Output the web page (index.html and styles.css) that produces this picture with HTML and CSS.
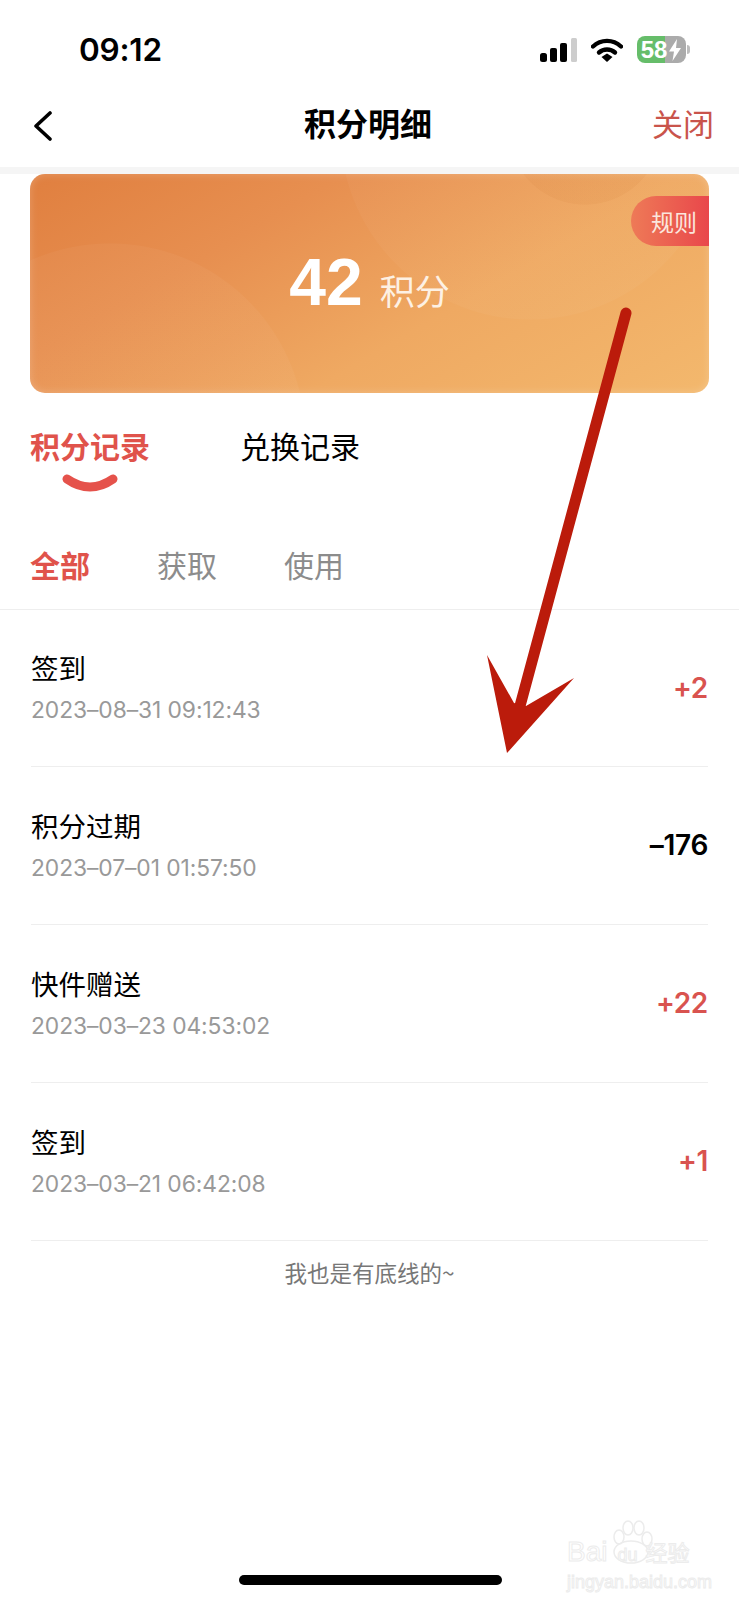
FILE: index.html
```html
<!DOCTYPE html>
<html lang="zh-CN">
<head>
  <meta charset="UTF-8" />
  <meta name="viewport" content="width=device-width, initial-scale=1" />
  <title>积分明细</title>
  <link rel="stylesheet" href="styles.css">
</head>
<body>

  <!-- Barra de estado -->
  <div class="status">
    <span class="status-time">09:12</span>
    <div class="status-icons">
      <svg class="icon-signal" width="37" height="24" viewBox="0 0 37 24">
        <rect x="0" y="15" width="7" height="9" rx="2.5" fill="#000"/>
        <rect x="10" y="10" width="7" height="14" rx="2" fill="#000"/>
        <rect x="20" y="5" width="7" height="19" rx="2" fill="#000"/>
        <rect x="31" y="0" width="6" height="24" rx="1.5" fill="#cdcdcd"/>
      </svg>
      <svg class="icon-wifi" width="32" height="24" viewBox="0 0 32 24">
        <path d="M2 8.5C10 1 22 1 30 8.5" fill="none" stroke="#000" stroke-width="4.4" stroke-linecap="round"/>
        <path d="M8 14.5C12.5 10.5 19.500 10.500 24 14.500" fill="none" stroke="#000" stroke-width="4.4" stroke-linecap="round"/>
        <polygon points="10.500,19 16,15.500 21.500,19 16,24" fill="#000"/>
      </svg>
      <div class="battery">
        <div class="battery-body">
          <span class="battery-num">58</span>
          <svg class="battery-bolt" width="14" height="22" viewBox="0 0 14 22">
            <polygon points="9,0 1,12.500 6,12.500 4.500,22 13,9 8,9" fill="#fff"/>
          </svg>
        </div>
        <div class="battery-tip"></div>
      </div>
    </div>
  </div>

  <!-- Cabecera -->
  <div class="nav">
    <svg class="nav-back" width="20" height="30" viewBox="0 0 20 30">
      <path d="M17 2L3 15L17 28" fill="none" stroke="#000" stroke-width="3.600" stroke-linecap="round" stroke-linejoin="round"/>
    </svg>
    <div class="nav-title">积分明细</div>
    <div class="nav-close">关闭</div>
  </div>
  <div class="nav-line"></div>

  <!-- Tarjeta de puntos -->
  <div class="card">
    <div class="card-rule">规则</div>
    <span class="card-num">42</span>
    <span class="card-unit">积分</span>
  </div>

  <!-- Pestañas -->
  <div class="tabs">
    <div class="tab tab-on">
      积分记录
      <svg class="tab-smile" width="56" height="20" viewBox="0 0 56 20">
        <path d="M5 5Q28 21 51 5" fill="none" stroke="#e5524b" stroke-width="9" stroke-linecap="round"/>
      </svg>
    </div>
    <div class="tab">兑换记录</div>
  </div>

  <div class="filters">
    <span class="filter filter-on">全部</span>
    <span class="filter">获取</span>
    <span class="filter">使用</span>
  </div>

  <!-- Lista de registros -->
  <div class="list">
    <div class="row">
      <div>
        <div class="row-title">签到</div>
        <div class="row-date">2023–08–31 09:12:43</div>
      </div>
      <div class="row-num plus">+2</div>
    </div>
    <div class="row">
      <div>
        <div class="row-title">积分过期</div>
        <div class="row-date">2023–07–01 01:57:50</div>
      </div>
      <div class="row-num">–176</div>
    </div>
    <div class="row">
      <div>
        <div class="row-title">快件赠送</div>
        <div class="row-date">2023–03–23 04:53:02</div>
      </div>
      <div class="row-num plus">+22</div>
    </div>
    <div class="row">
      <div>
        <div class="row-title">签到</div>
        <div class="row-date">2023–03–21 06:42:08</div>
      </div>
      <div class="row-num plus">+1</div>
    </div>
  </div>

  <div class="list-end">我也是有底线的~</div>

  <div class="home-bar"></div>

  <!-- Flecha roja encima de la captura -->
  <svg class="arrow" width="739" height="1600" viewBox="0 0 739 1600">
    <path d="M626 313L520 706" fill="none" stroke="#bb1b0b" stroke-width="11" stroke-linecap="round"/>
    <polygon points="487,655 514,703 526,706 574,678 507,753" fill="#bb1b0b"/>
  </svg>

  <!-- Marca de agua -->
  <div class="mark">
    <svg class="mark-paw" width="88" height="44" viewBox="0 0 88 44">
      <g fill="none" stroke="#ececec" stroke-width="1.500">
        <ellipse cx="52" cy="17" rx="5" ry="7"/>
        <ellipse cx="61" cy="8" rx="5" ry="7"/>
        <ellipse cx="72" cy="8" rx="5" ry="7"/>
        <ellipse cx="80" cy="19" rx="5" ry="7"/>
        <ellipse cx="64" cy="32" rx="17" ry="11"/>
      </g>
    </svg>
    <div class="mark-top"><span>Bai</span><span class="mark-du">du</span><span class="mark-cn">经验</span></div>
    <div class="mark-url">jingyan.baidu.com</div>
  </div>

</body>
</html>
```

FILE: styles.css
```css
body {
  margin: 0;
  width: 739px;
  height: 1600px;
  overflow: hidden;
  position: relative;
  background: #fff;
  color: #000;
  font-family: "Noto Sans CJK SC", "Liberation Sans", sans-serif;
}

/* Barra de estado */
.status {
  height: 84px;
  box-sizing: border-box;
  padding: 34px 49px 0 79px;
  display: flex;
  justify-content: space-between;
  align-items: flex-start;
}

.status-time {
  font-family: "Inter", sans-serif;
  font-size: 31.500px;
  font-weight: 600;
  letter-spacing: -0.200px;
  line-height: 31px;
}

.status-icons {
  display: flex;
  align-items: center;
  gap: 14px;
  padding-top: 2px;
}

.icon-signal,
.icon-wifi {
  display: block;
}

.battery {
  display: flex;
  align-items: center;
  gap: 1px;
}

.battery-body {
  width: 49px;
  height: 27px;
  border-radius: 8px;
  background: linear-gradient(to right, #66bd6a 58%, #ababab 58%);
  display: flex;
  align-items: center;
  justify-content: center;
  gap: 1px;
}

.battery-num {
  font-family: "Liberation Sans", sans-serif;
  font-size: 24px;
  font-weight: 700;
  color: #fff;
  line-height: 27px;
}

.battery-tip {
  width: 3px;
  height: 9px;
  border-radius: 0 3px 3px 0;
  background: #bdbdbd;
}

/* Cabecera */
.nav {
  height: 83px;
  box-sizing: border-box;
  padding: 0 25px 0 33px;
  display: flex;
  align-items: center;
  justify-content: space-between;
  position: relative;
}

.nav-title {
  position: absolute;
  left: 304px;
  top: 16px;
  font-size: 32px;
  font-weight: 700;
  line-height: 44px;
}

.nav-close {
  font-size: 31px;
  line-height: 44px;
  margin-bottom: 6px;
  color: #c9544b;
}

.nav-line {
  height: 7px;
  background: #f5f5f5;
}

/* Tarjeta */
.card {
  margin: 0 30px;
  height: 219px;
  box-sizing: border-box;
  border-radius: 15px;
  position: relative;
  overflow: hidden;
  padding-top: 73px;
  display: flex;
  justify-content: center;
  align-items: baseline;
  gap: 17px;
  color: #fff;
  box-shadow: inset 0 0 8px rgba(255, 255, 255, 0.22);
  background:
    radial-gradient(circle 196px at 80px 265px, rgba(255, 255, 255, 0.035) 99.500%, transparent 100%),
    radial-gradient(circle 78px at 555px -47px, rgba(205, 120, 50, 0.1) 99%, transparent 100%),
    radial-gradient(circle 190px at 500px -44px, rgba(255, 255, 255, 0.03) 99.500%, transparent 100%),
    linear-gradient(150deg, #e07f3f 0%, #e78f50 30%, #efa962 62%, #f3b86d 100%);
}

.card-rule {
  position: absolute;
  top: 22px;
  right: 0;
  width: 78px;
  height: 50px;
  box-sizing: border-box;
  padding-left: 20px;
  border-radius: 25px 0 0 25px;
  background: linear-gradient(to right, #ee7a57, #e9474b);
  font-size: 23px;
  line-height: 50px;
  color: #fbe6dd;
}

.card-num {
  font-family: "Liberation Sans", sans-serif;
  font-size: 66px;
  font-weight: 700;
  line-height: 70px;
}

.card-unit {
  font-size: 35px;
  line-height: 40px;
  color: #fdf1e4;
}

/* Pestañas */
.tabs {
  margin-top: 29px;
  padding-left: 30px;
  display: flex;
  gap: 90px;
  height: 122px;
}

.tab {
  font-size: 30px;
  line-height: 46px;
  white-space: nowrap;
}

.tab-on {
  font-weight: 700;
  color: #e0534b;
}

.tab-smile {
  display: block;
  margin: 6px auto 0;
}

.filters {
  padding: 0 0 25px 30px;
  display: flex;
  gap: 67px;
  border-bottom: 1px solid #eeeeee;
}

.filter {
  font-size: 30px;
  line-height: 40px;
  color: #8c8c8c;
}

.filter-on {
  font-weight: 700;
  color: #e0534b;
}

/* Lista */
.list {
  margin: 0 31px;
}

.row {
  height: 158px;
  box-sizing: border-box;
  padding-top: 37px;
  border-bottom: 1px solid #eeeeee;
  display: flex;
  justify-content: space-between;
  align-items: flex-start;
}

.row:first-child {
  height: 157px;
  padding-top: 36px;
}

.row-title {
  font-size: 27.500px;
  line-height: 42px;
}

.row-date {
  font-family: "Inter", sans-serif;
  font-size: 22.800px;
  letter-spacing: -0.070px;
  line-height: 43px;
  color: #999;
}

.row-num {
  font-family: "Inter", sans-serif;
  font-size: 28px;
  font-weight: 600;
  letter-spacing: -0.300px;
  line-height: 34px;
  padding-top: 24px;
}

.row:first-child .row-num {
  padding-top: 25px;
}

.plus {
  color: #d9534f;
}

.list-end {
  margin-top: 15px;
  text-align: center;
  font-size: 22.500px;
  line-height: 32px;
  color: #777;
}

.home-bar {
  position: absolute;
  left: 239px;
  top: 1575px;
  width: 263px;
  height: 10px;
  border-radius: 5px;
  background: #000;
}

.arrow {
  position: absolute;
  left: 0;
  top: 0;
}

/* Marca de agua */
.mark {
  position: absolute;
  left: 567px;
  top: 1520px;
  width: 135px;
  height: 64px;
  color: #fff;
  -webkit-text-stroke: 1px #ececec;
  font-family: "Liberation Sans", sans-serif;
}

.mark-paw {
  position: absolute;
  left: 0;
  top: 0;
}

.mark-top {
  padding-top: 16px;
  display: flex;
  align-items: baseline;
  font-size: 28px;
  line-height: 30px;
  position: relative;
}

.mark-du {
  font-size: 18px;
  margin-left: 10px;
}

.mark-cn {
  font-family: "Noto Sans CJK SC", sans-serif;
  font-size: 22px;
  margin-left: 8px;
}

.mark-url {
  font-size: 18px;
  line-height: 20px;
  white-space: nowrap;
  margin-top: 2px;
}
```
